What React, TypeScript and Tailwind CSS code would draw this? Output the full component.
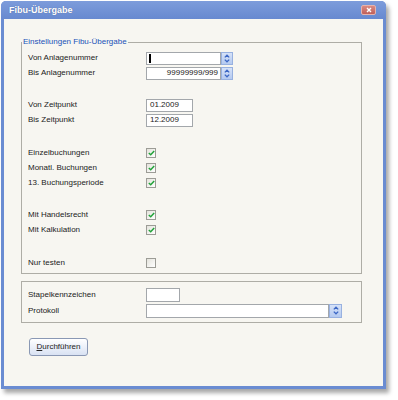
import React from "react"

// Small XP-style spin button (up/down chevrons)
function SpinButton({ className = "" }: { className?: string }) {
    return (
        <div className={`w-[12px] h-full flex items-center justify-center border border-[#98b1e0] bg-gradient-to-b from-[#d6e2f8] to-[#b5caf0] ${className}`}>
            <svg width="6" height="9" viewBox="0 0 6 9">
                <path d="M0.8 3.4 L3 1.2 L5.2 3.4" fill="none" stroke="#3b66c4" strokeWidth="1.3" />
                <path d="M0.8 5.6 L3 7.8 L5.2 5.6" fill="none" stroke="#3b66c4" strokeWidth="1.3" />
            </svg>
        </div>
    );
}

function Check({ checked }: { checked: boolean }) {
    return (
        <div className="w-[10px] h-[10px] border border-[#9c9c96] bg-gradient-to-br from-[#e4e3dc] to-white flex items-center justify-center">
            {checked && (
                <svg width="7" height="6" viewBox="0 0 7 6">
                    <path d="M0.8 3 L2.7 4.8 L6.2 0.9" fill="none" stroke="#22a33a" strokeWidth="1.5" />
                </svg>
            )}
        </div>
    );
}

function Row({ label, children, h = "h-[15px]" }: { label: string; children?: React.ReactNode; h?: string }) {
    return (
        <div className={`flex items-center ${h}`}>
            <div className="w-[118px] text-[8px] text-[#222]">{label}</div>
            {children}
        </div>
    );
}

export default function App() {
    return (
        <div className="w-[398px] h-[400px] bg-white pt-[1px] pl-[1px] font-['Liberation_Sans',Arial,sans-serif]">
            <div className="w-[385px] h-[388px] flex flex-col rounded-t-[5px] bg-[#6a8cd2] shadow-[3px_4px_4px_rgba(0,0,0,0.35)]">
                {/* Title bar */}
                <div className="h-[18px] flex items-center justify-between pl-[8px] pr-[10px] rounded-t-[5px] bg-gradient-to-b from-[#7d9cdb] to-[#6789d0]">
                    <span className="text-white text-[9px] font-bold leading-none [text-shadow:0_0_1px_rgba(0,0,0,0.3)]">Fibu-Übergabe</span>
                    <div className="w-[15px] h-[10px] rounded-[2px] border border-[#e6b3ad] bg-gradient-to-b from-[#d98a82] to-[#c0605a] flex items-center justify-center">
                        <svg width="6" height="6" viewBox="0 0 6 6">
                            <path d="M1 1 L5 5 M5 1 L1 5" stroke="white" strokeWidth="1.4" />
                        </svg>
                    </div>
                </div>

                {/* Client area */}
                <div className="flex-1 mx-[3px] mb-[3px] bg-[#f7f6f1] pl-[17px] pr-[21px] pt-[18px] text-[#222]">
                    <fieldset className="border border-[#aeada6] p-0 m-0">
                        <legend className="px-[1px] text-[8px] leading-[10px] text-[#2152b8]">Einstellungen Fibu-Übergabe</legend>
                        <div className="pl-[6px] pt-[3.5px] pb-[2px] flex flex-col">
                            <Row label="Von Anlagenummer">
                                <div className="flex h-[13px] w-[87px]">
                                    <div className="flex-1 border border-[#a3a7ab] bg-white flex items-center pl-[2px]">
                                        <div className="w-[2px] h-[9px] bg-black" />
                                    </div>
                                    <SpinButton />
                                </div>
                            </Row>
                            <Row label="Bis Anlagenummer">
                                <div className="flex h-[13px] w-[87px]">
                                    <div className="flex-1 border border-[#a3a7ab] bg-white flex items-center justify-end pr-[2px] text-[8px]">99999999/999</div>
                                    <SpinButton />
                                </div>
                            </Row>
                            <div className="h-[17px]" />
                            <Row label="Von Zeitpunkt">
                                <div className="w-[47px] h-[13px] border border-[#a3a7ab] bg-white flex items-center pl-[3px] text-[8px]">01.2009</div>
                            </Row>
                            <Row label="Bis Zeitpunkt">
                                <div className="w-[47px] h-[13px] border border-[#a3a7ab] bg-white flex items-center pl-[3px] text-[8px]">12.2009</div>
                            </Row>
                            <div className="h-[18px]" />
                            <Row label="Einzelbuchungen"><Check checked /></Row>
                            <Row label="Monatl. Buchungen"><Check checked /></Row>
                            <Row label="13. Buchungsperiode"><Check checked /></Row>
                            <div className="h-[17px]" />
                            <Row label="Mit Handelsrecht"><Check checked /></Row>
                            <Row label="Mit Kalkulation"><Check checked /></Row>
                            <div className="h-[18px]" />
                            <Row label="Nur testen"><Check checked={false} /></Row>
                        </div>
                    </fieldset>

                    <div className="mt-[7px] border border-[#aeada6] pl-[6px] pt-[5px] pb-[3px] flex flex-col">
                        <Row label="Stapelkennzeichen" h="h-[16px]">
                            <div className="w-[34px] h-[14px] border border-[#a3a7ab] bg-white" />
                        </Row>
                        <Row label="Protokoll" h="h-[16px]">
                            <div className="flex h-[14px] w-[196px]">
                                <div className="flex-1 border border-[#a3a7ab] bg-white" />
                                <SpinButton className="w-[13px]" />
                            </div>
                        </Row>
                    </div>

                    <button className="mt-[15px] ml-[8px] w-[59px] h-[18px] rounded-[3px] border border-[#8a98b4] bg-gradient-to-b from-white to-[#d9e2f3] text-[8px] text-[#222] flex items-center justify-center">
                        <span><span className="underline">D</span>urchführen</span>
                    </button>
                </div>
            </div>
        </div>
    );
}
